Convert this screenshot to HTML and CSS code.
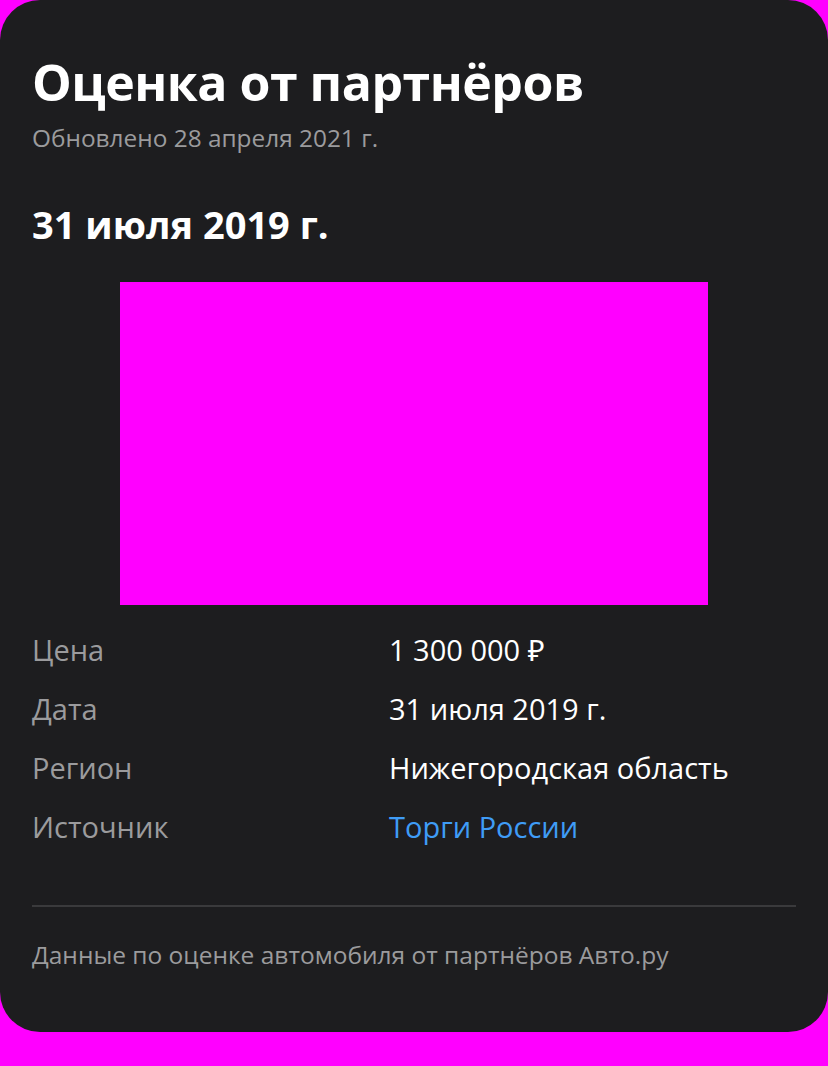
FILE: index.html
```html
<!DOCTYPE html>
<html lang="ru">
<head>
<meta charset="utf-8">
<link rel="stylesheet" href="styles.css">
</head>
<body>
<div class="card">
  <h1 class="title">Оценка от партнёров</h1>
  <div class="updated">Обновлено 28 апреля 2021 г.</div>
  <h2 class="date">31 июля 2019 г.</h2>
  <div class="chart-wrap"><div class="chart"></div></div>
  <dl class="info">
    <div class="row"><dt>Цена</dt><dd>1 300 000 ₽</dd></div>
    <div class="row"><dt>Дата</dt><dd>31 июля 2019 г.</dd></div>
    <div class="row"><dt>Регион</dt><dd>Нижегородская область</dd></div>
    <div class="row"><dt>Источник</dt><dd><a class="link" href="#">Торги России</a></dd></div>
  </dl>
  <div class="divider"></div>
  <p class="footer">Данные по оценке автомобиля от партнёров Авто.ру</p>
</div>
</body>
</html>
```
FILE: styles.css
```css
html, body {
  margin: 0;
  padding: 0;
  background: #f0f;
}
body {
  font-family: "Open Sans", "Noto Sans", sans-serif;
  width: 828px;
  height: 1066px;
}
.card {
  box-sizing: border-box;
  width: 828px;
  height: 1032px;
  background: #1d1d1f;
  border-radius: 40px;
  padding: 52px 32px 0;
  color: #fff;
}
.title {
  margin: 0;
  font-size: 50px;
  font-weight: 700;
  line-height: 60px;
  letter-spacing: -0.5px;
}
.updated {
  margin-top: 11px;
  font-size: 24.4px;
  line-height: 30px;
  color: #9b9b9d;
}
.date {
  margin: 49px 0 0;
  font-size: 38px;
  font-weight: 700;
  line-height: 44px;
}
.chart-wrap {
  display: flex;
  justify-content: center;
  margin-top: 36px;
}
.chart {
  width: 588px;
  height: 323px;
  background: #f0f;
}
.info {
  margin: 15px 0 0;
}
.row {
  display: grid;
  grid-template-columns: 357px 1fr;
  height: 59px;
  align-items: center;
  font-size: 29px;
}
.row dt {
  color: #9b9b9d;
}
.row dd {
  margin: 0;
  color: #fff;
}
.link {
  color: #3f9cf6;
  text-decoration: none;
}
.divider {
  margin-top: 49px;
  height: 2px;
  background: #3a3a3c;
}
.footer {
  margin: 33px 0 0;
  font-size: 24.5px;
  line-height: 30px;
  color: #9b9b9d;
}
```
